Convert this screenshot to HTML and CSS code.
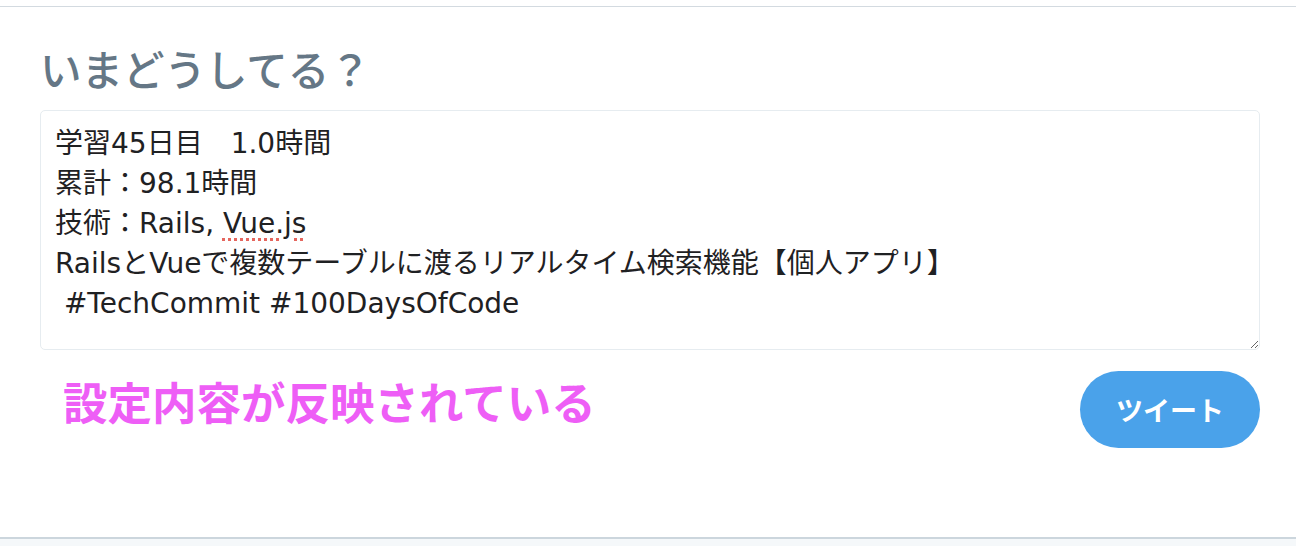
FILE: index.html
```html
<!DOCTYPE html>
<html lang="ja">
<head>
<meta charset="utf-8">
<link rel="stylesheet" href="styles.css">
</head>
<body>
<div class="topgap"></div>
<section class="card">
  <h2 class="title">いまどうしてる？</h2>
  <div class="editor">
    <div class="line">学習45日目　1.0時間</div>
    <div class="line">累計：98.1時間</div>
    <div class="line">技術：Rails, <span class="misspell">Vue.js</span></div>
    <div class="line">RailsとVueで複数テーブルに渡るリアルタイム検索機能【個人アプリ】</div>
    <div class="line">&nbsp;#TechCommit #100DaysOfCode</div>
  </div>
  <div class="actions">
    <p class="note">設定内容が反映されている</p>
    <button class="tweet">ツイート</button>
  </div>
</section>
<div class="below"></div>
</body>
</html>
```

FILE: styles.css
```css
html, body {
  margin: 0;
  padding: 0;
  background: #ffffff;
  font-family: "Noto Sans CJK JP", "Noto Sans", sans-serif;
}
.topgap {
  height: 6px;
  background: #ffffff;
}
.card {
  border-top: 1px solid #d3dae0;
  border-bottom: 2px solid #ccd6dd;
  background: #ffffff;
  padding: 38px 36px 0 40px;
  height: 492px;
  box-sizing: content-box;
}
.title {
  margin: 0 0 19px 0;
  font-size: 41.5px;
  line-height: 46px;
  font-weight: 500;
  color: #657786;
}
.editor {
  box-sizing: border-box;
  height: 240px;
  border: 1px solid #e6ecf0;
  border-radius: 5px;
  padding: 13px 14px 11px;
  font-family: "DejaVu Sans", "Noto Sans CJK JP", sans-serif;
  font-size: 28px;
  line-height: 40px;
  color: #1f2123;
  overflow: auto;
  resize: vertical;
}
.line {
  white-space: pre;
}
.misspell {
  text-decoration: underline dotted #e5665e;
  text-decoration-thickness: 3px;
  text-underline-offset: 5px;
}
.actions {
  display: flex;
  align-items: center;
  justify-content: space-between;
  margin-top: 21px;
}
.note {
  margin: 0 0 17px 23px;
  font-size: 44.5px;
  line-height: 56px;
  font-weight: 700;
  color: #ee5ef6;
}
.tweet {
  width: 180px;
  height: 77px;
  border: none;
  border-radius: 39px;
  background: #4aa2ea;
  color: #ffffff;
  font-family: "Noto Sans CJK JP", sans-serif;
  font-size: 27px;
  font-weight: 700;
  cursor: pointer;
}
.below {
  height: 7px;
  background: #f5f8fa;
}
```
